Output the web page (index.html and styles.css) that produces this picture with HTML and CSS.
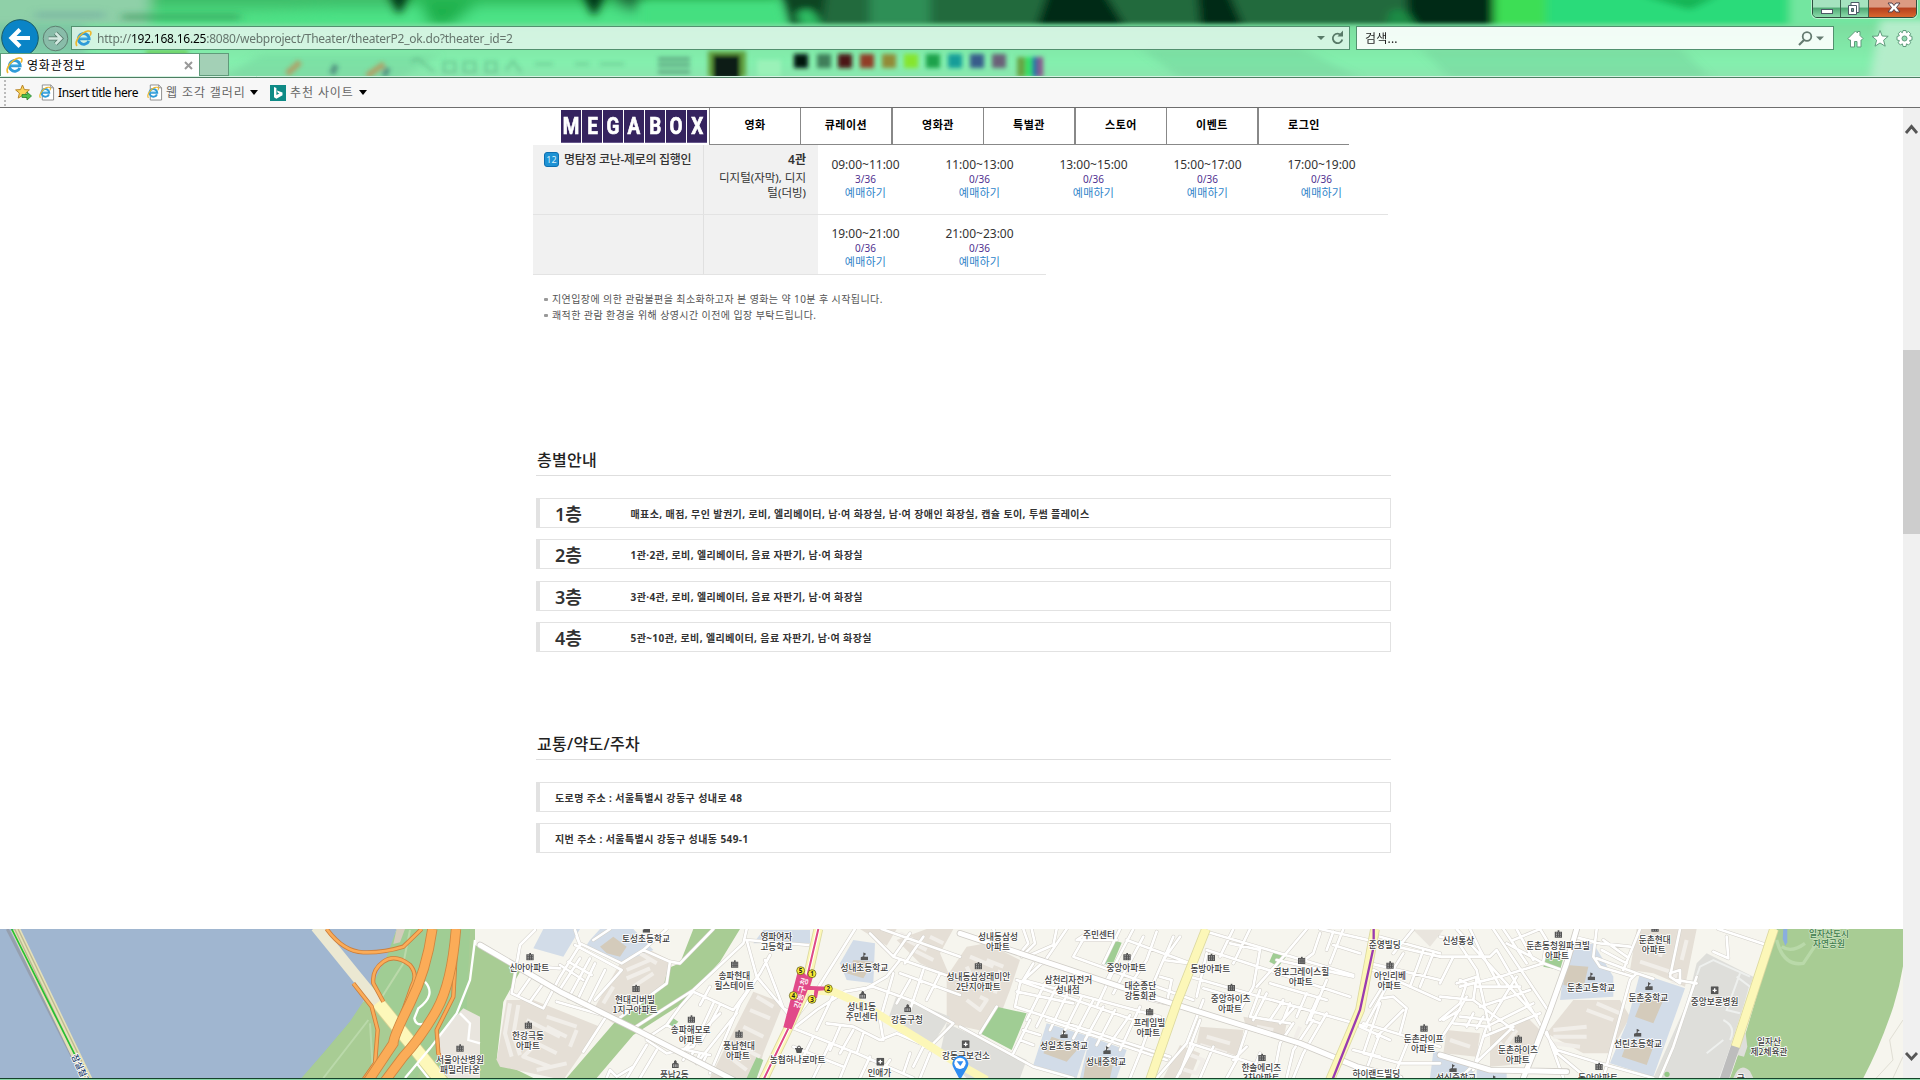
FILE: index.html
```html
<!DOCTYPE html>
<html lang="ko">
<head>
<meta charset="utf-8">
<title>영화관정보</title>
<link rel="stylesheet" href="styles.css">
</head>
<body>
<svg class="defs" width="0" height="0" aria-hidden="true">
  <defs>
    <symbol id="ie" viewBox="0 0 18 18">
      <path d="M14.6 11.6A5.7 5.7 0 1 1 15 9.4H5.2" fill="none" stroke="#2f9bd8" stroke-width="3"/>
      <path d="M5 8.2h8" stroke="#7fd0f3" stroke-width="1"/>
      <path d="M2.2 16.8C-.6 14 3 7 8 3.600c4-2.700 8-3.400 8.700-1.400.4 1.100-.2 2.600-.8 3.600" fill="none" stroke="#edb72c" stroke-width="1.700"/>
    </symbol>
    <symbol id="page" viewBox="0 0 17 18">
      <path d="M3.500 1h9l3 3v13h-12z" fill="#fff" stroke="#8b8b8b"/>
      <path d="M12.500 1v3h3" fill="none" stroke="#8b8b8b"/>
      <use href="#ie" x="0" y="2.500" width="13" height="13"/>
    </symbol>
    <symbol id="apt" viewBox="0 0 24 24" width="24" height="24">
      <path d="M1 5h9V1h5v4h8v18H1z" fill="#555"/>
      <path d="M5 9h3m-3 5h3m-3 5h3m4-10h2m-2 5h2m-2 5h2m4-10h2m-2 5h2m-2 5h2" stroke="#eee" stroke-width="2"/>
    </symbol>
    <symbol id="school" viewBox="0 0 24 24" width="24" height="24"><path d="M1 15l8-3V0l9 5-6 4v4h11v11H1z" fill="#555"/></symbol>
    <symbol id="gov" viewBox="0 0 24 24" width="24" height="24"><path d="M2 24V11l6-3V4l4-4 4 4v4l6 3v13z" fill="#555"/><path d="M7 13v8m5-8v8m5-8v8" stroke="#ddd" stroke-width="2"/></symbol>
    <symbol id="hosp" viewBox="0 0 24 24" width="24" height="24"><rect width="24" height="24" rx="3" fill="#555"/><path d="M12 6v12M6 12h12" stroke="#fff" stroke-width="4"/></symbol>
    <symbol id="mart" viewBox="0 0 24 24" width="24" height="24"><path d="M0 9h5l4-7h6l4 7h5v4h-2l-3 11H5L2 13H0z" fill="#555"/><path d="M8 9l2-4h4l2 4z" fill="#eee"/></symbol>
  </defs>
</svg>

<div class="window">
  <header class="glass">
    <svg class="backdrop" viewBox="0 0 1920 77" width="1920" height="77" aria-hidden="true">
      <defs>
        <linearGradient id="veil" x1="0" y1="0" x2="0" y2="1"><stop offset="0" stop-color="#7cdc9e"/><stop offset=".55" stop-color="#84f0ae"/><stop offset="1" stop-color="#92d8ae"/></linearGradient>
        <filter id="b6" x="-20%" y="-60%" width="140%" height="220%"><feGaussianBlur stdDeviation="7"/></filter>
        <filter id="b4" x="-20%" y="-60%" width="140%" height="220%"><feGaussianBlur stdDeviation="5 3"/></filter>
        <filter id="b3" x="-20%" y="-60%" width="140%" height="220%"><feGaussianBlur stdDeviation="2.200"/></filter>
      </defs>
      <rect width="1920" height="77" fill="#4fe085"/>
      <g filter="url(#b6)">
        <path d="M-20-20H150V40H-20z" fill="#8fd0a8"/>
        <path d="M150-20H400V8H150z" fill="#3cbc68"/>
        <path d="M400-20H780V5H400z" fill="#2cb957"/>
        <path d="M330 8h450v20H240z" fill="#4be386"/>
        <path d="M600-20h40v30h-15z" fill="#1b6535"/><path d="M420 2h60l-30 24h-20z" fill="#1fb04c"/>
      </g>
      <g filter="url(#b4)">
        <path d="M122 14h118v6H122z" fill="#2a8a4d" opacity=".55"/><path d="M35 12h70v6H35z" fill="#6fa9a0" opacity=".6"/>
        <path d="M386-10h26l-13 26zM580-10h28l-14 28z" fill="#053915"/>
        <path d="M640 3h140l6 26H640z" fill="#45df80"/>
        <path d="M778-15h716v43H790z" fill="#216b3d"/>
        <path d="M778-15h50l-6 40h-30z" fill="#0b4420"/>
        <path d="M797 14q14-14 24 12h-20z" fill="#2fbd63"/>
        <path d="M870-15h60v40h-60z" fill="#2d8f57"/>
        <path d="M1050-15h50l26 42h-90zM1196-15h30l18 42h-44zM1405-15h91l-2 42h-85z" fill="#012a12"/>
        <path d="M1390 12q14-10 26 14h-30z" fill="#1d8b45"/>
        <path d="M1494-15h60l-6 43h-54z" fill="#3ede55"/>
        <path d="M1546-15h260v43h-260z" fill="#2bdb7a"/><path d="M1640-5h80l-30 15z" fill="#13b455"/>
        <path d="M1790-15h140v50h-140z" fill="#73e6a0"/>
      </g>
      <rect x="-20" y="24" width="1960" height="70" fill="url(#veil)" filter="url(#b3)"/>
      <g filter="url(#b4)"><path d="M-10 24h95v30H-10z" fill="#7fb9a6" opacity=".7"/><path d="M260 55h180l-50 30H210zM1140 48l40 30h180l-60-30zM1420 48l30 30h260l-30-30z" fill="#72ce98" opacity=".4"/><path d="M1880 20h50v60h-60z" fill="#b4edca"/></g>
      <g filter="url(#b3)">
        <path d="M146 50h42v6h-42z" fill="#6fd060"/>
        <g opacity=".55">
          <path d="M287 74l13-12M367 76l17-12" stroke="#d5733d" stroke-width="6"/><path d="M332 74l4-9M384 76l4-8" stroke="#355c68" stroke-width="6"/>
          <path d="M412 62q5-6 10 0l12 10M444 62h11v10h-11zM464 62h11v10h-11zM486 62h10v10h-10zM506 70l7-9 8 11M535 64h18M575 64h14M600 64h24" fill="none" stroke="#3f8963" stroke-width="2.200" opacity=".7"/>
        </g>
        <path d="M658 59h32m-32 6h32m-32 7h32" stroke="#579a78" stroke-width="3"/>
        <path d="M708 51h38v26h-38z" fill="#62a23f"/><path d="M713 55h27v24h-27z" fill="#101d18"/>
        <path d="M757 60h24v16h-24z" fill="#9af1b8"/>
        <path d="M794 54h14v14h-14z" fill="#04140d"/><path d="M817 54h14v14h-14z" fill="#417f5a"/>
        <path d="M838 54h14v14h-14z" fill="#4b1414"/><path d="M860 54h14v14h-14z" fill="#913c27"/>
        <path d="M882 54h14v14h-14z" fill="#928b39"/><path d="M904 54h14v14h-14z" fill="#86e52e"/>
        <path d="M926 54h14v14h-14z" fill="#1fa24c"/><path d="M948 54h14v14h-14z" fill="#159d99"/>
        <path d="M970 54h14v14h-14z" fill="#375b8b"/><path d="M992 54h14v14h-14z" fill="#6b6078"/>
        <path d="M1017 57h8v20h-8z" fill="#67a444"/><path d="M1025 57h7v20h-7z" fill="#34e067"/><path d="M1032 57h6v20h-6z" fill="#2e6fa4"/><path d="M1038 57h5v20h-5z" fill="#8b528b"/>
      </g>
      <path d="M0 76.500h1920" stroke="#d5f3e2"/>
    </svg>

    <div class="winbtns">
      <span class="wb"><svg width="28" height="22"><rect x="8.500" y="10.500" width="11" height="4" fill="#fff" stroke="#4b5a66"/></svg></span>
      <span class="wb"><svg width="27" height="22"><path d="M10 3.500h8v10h-8z" fill="#fff" stroke="#4b5a66"/><path d="M7.500 6.500h8v9h-8z" fill="#fff" stroke="#4b5a66"/><path d="M10.500 9.500h2v3h-2z" fill="#6aa888" stroke="#4b5a66"/></svg></span>
      <span class="wb close"><svg width="48" height="22"><path d="M19 4h4l2 2.500L27 4h4l-3.500 4.500L31 13h-4l-2-2.500-2 2.500h-4l3.500-4.500z" fill="#fff" stroke="#54414b"/></svg></span>
    </div>

    <div class="navrow">
      <div class="travel">
        <span class="back"><svg width="38" height="38" viewBox="0 0 38 38"><circle cx="19" cy="19" r="18.300" fill="#0a84c6" stroke="#1b5a62"/><path d="M29 19H12M19 10.500L10.500 19l8.500 8.500" fill="none" stroke="#fff" stroke-width="4.200"/></svg></span>
        <span class="fwd"><svg width="27" height="27" viewBox="0 0 27 27"><circle cx="13.500" cy="13.500" r="12.300" fill="#8fb5ac" fill-opacity=".6" stroke="#5d7f70"/><path d="M6.500 13.500h11M13.500 8l5.500 5.500-5.500 5.500" fill="none" stroke="#55776a" stroke-width="4.200"/><path d="M6.500 13.500h11M13.500 8l5.500 5.500-5.500 5.500" fill="none" stroke="#d3e9e1" stroke-width="2.600"/></svg></span>
      </div>
      <div class="address">
        <svg width="17" height="17"><use href="#ie"/></svg>
        <span class="url">http://<b>192.168.16.25</b>:8080/webproject/Theater/theaterP2_ok.do?theater_id=2</span>
        <svg width="30" height="18"><path d="M3 7h8l-4 4z" fill="#587a68"/><path d="M27.500 6.500a4.800 4.800 0 1 0 .8 4" fill="none" stroke="#587a68" stroke-width="1.800"/><path d="M23.500 7.500h5.500v-6z" fill="#587a68"/></svg>
      </div>
      <div class="search">
        <span>검색...</span>
        <svg width="32" height="18"><circle cx="11" cy="7.500" r="4.300" fill="none" stroke="#657a70" stroke-width="1.800"/><path d="M8 11l-5 5" stroke="#657a70" stroke-width="2.200"/><path d="M20 7.500h8l-4 4z" fill="#657a70"/></svg>
      </div>
      <svg class="tools" width="68" height="20" viewBox="0 0 68 20" fill="#fff" stroke="#5f9b7c">
        <path d="M1 9.500L8.500 2l2 2V2.500h2.500V6.500L16 9.500l-1.500 1.500H14V18h-4v-5.500H7.500V18H3.500v-7H2z"/>
        <path d="M33 1.500l2.200 5.500 6 .3-4.600 3.900 1.600 6L33 14l-5 3.200 1.600-6L25 7.300l6-.3z"/>
        <path d="M56 1.500h3l.5 2.200 2-1.200 2.200 2.200-1.200 2 2.500.8v3.500l-2.500.6 1.200 2.200-2.200 2.200-2-1.200-.5 2.700h-3l-.6-2.700-2 1.200-2.200-2.200 1.200-2.200L50 11V7.500l2.400-.8-1.200-2 2.200-2.200 2 1.200z"/><circle cx="57.500" cy="9.500" r="2.500" fill="#90dcb0"/>
      </svg>
    </div>

    <div class="tabs">
      <div class="tab"><svg width="17" height="17"><use href="#ie"/></svg><span>영화관정보</span><svg class="x" width="9" height="9"><path d="M1 1l7 7M8 1L1 8" stroke="#999" stroke-width="2"/></svg></div>
      <div class="newtab"></div>
    </div>
  </header>

  <div class="favbar">
    <i class="grip"></i>
    <svg width="17" height="17" viewBox="0 0 17 17"><path d="M7.500 1l1.900 4.600 5 .3-3.800 3.200 1.200 5-4.300-2.700-4.300 2.700 1.200-5L.6 5.900l5-.3z" fill="#fbd65a" stroke="#b8862a"/><path d="M7 10.500h5V8l4.500 4-4.500 4v-2.500H7z" fill="#4fc04c" stroke="#2a8230" stroke-width=".8"/></svg>
    <a class="fav f1"><svg width="16" height="17"><use href="#page"/></svg><span>Insert title here</span></a>
    <a class="fav f2"><svg width="16" height="17"><use href="#page"/></svg><span>웹 조각 갤러리</span><i class="caret"></i></a>
    <a class="fav f3"><svg width="16" height="16"><path d="M0 0h16v16H0z" fill="#0e8a86"/><path d="M4 2l2.400 1v7l3-1.500-1.600-.8-.9-2.200L12.500 7.500v2.700L6.400 13.800 4 12.300z" fill="#fff"/></svg><span>추천 사이트</span><i class="caret"></i></a>
  </div>

  <div class="viewport">
    <main class="page">
      <div class="topnav">
        <div class="logo"><b><i>M</i></b><b><i>E</i></b><b><i>G</i></b><b><i>A</i></b><b><i>B</i></b><b><i>O</i></b><b><i>X</i></b></div>
        <nav class="menu"><a>영화</a><a>큐레이션</a><a>영화관</a><a>특별관</a><a>스토어</a><a>이벤트</a><a>로그인</a></nav>
      </div>

      <section class="schedule">
        <div class="row first">
          <div class="movie"><span class="age">12</span><span>명탐정 코난-제로의 집행인</span></div>
          <div class="hall"><b>4관</b><span>디지털(자막), 디지<br>털(더빙)</span></div>
          <div class="slot"><time>09:00~11:00</time><em>3/36</em><a>예매하기</a></div>
          <div class="slot"><time>11:00~13:00</time><em>0/36</em><a>예매하기</a></div>
          <div class="slot"><time>13:00~15:00</time><em>0/36</em><a>예매하기</a></div>
          <div class="slot"><time>15:00~17:00</time><em>0/36</em><a>예매하기</a></div>
          <div class="slot"><time>17:00~19:00</time><em>0/36</em><a>예매하기</a></div>
        </div>
        <div class="row second">
          <div class="movie"></div>
          <div class="hall"></div>
          <div class="slot"><time>19:00~21:00</time><em>0/36</em><a>예매하기</a></div>
          <div class="slot"><time>21:00~23:00</time><em>0/36</em><a>예매하기</a></div>
        </div>
      </section>
      <ul class="notes">
        <li>지연입장에 의한 관람불편을 최소화하고자 본 영화는 약 10분 후 시작됩니다.</li>
        <li>쾌적한 관람 환경을 위해 상영시간 이전에 입장 부탁드립니다.</li>
      </ul>

      <section class="info floors">
        <h2>층별안내</h2>
        <div class="bar"><strong>1층</strong><span>매표소, 매점, 무인 발권기, 로비, 엘리베이터, 남·여 화장실, 남·여 장애인 화장실, 캡슐 토이, 투썸 플레이스</span></div>
        <div class="bar"><strong>2층</strong><span>1관·2관, 로비, 엘리베이터, 음료 자판기, 남·여 화장실</span></div>
        <div class="bar"><strong>3층</strong><span>3관·4관, 로비, 엘리베이터, 음료 자판기, 남·여 화장실</span></div>
        <div class="bar"><strong>4층</strong><span>5관~10관, 로비, 엘리베이터, 음료 자판기, 남·여 화장실</span></div>
      </section>

      <section class="info access">
        <h2>교통/약도/주차</h2>
        <div class="bar"><span>도로명 주소 : 서울특별시 강동구 성내로 48</span></div>
        <div class="bar"><span>지번 주소 : 서울특별시 강동구 성내동 549-1</span></div>
      </section>

      <svg class="map" viewBox="0 27 5709 447" width="1903" height="149">
        <defs>
          <!-- local streets, drawn once as casing and once as surface -->
          <g id="streets">
            <g transform="translate(1440 0)">
              <path d="M165 30L120 75 95 220 190 265 240 170 300 75 285 30M150 175L115 225M190 190L150 245M240 145L165 140M285 75L425 150M240 135L310 180M265 125L335 165M300 115L235 215M330 115L265 235M345 130L290 245M375 150L320 260M230 245L385 290M290 50L300 75M340 60L390 27M300 70L425 130 490 90 570 125 600 130 700 27M490 90L560 27M570 125L560 190 410 300M425 150L345 240M375 295L310 395M460 325L640 210 790 70 800 27M500 355L560 315 600 260 640 215 760 270 840 160M690 200L660 255M800 60L830 170 940 300M800 60L985 75M855 120L910 265 940 280M870 105L840 160 780 250 690 460M500 360L560 400 640 380 700 250M560 315L660 370 720 255M600 400L720 280M650 430L770 280M440 474L500 375M480 474L530 390M380 474L390 450 410 470 460 440M620 390L690 405M620 400L610 420M640 395L630 415M660 400L650 420M680 405L670 425"/>
              <path d="M1125 27L1010 210 935 310M1170 40L1240 110 1440 180M1205 27L1440 110M1240 110L1290 40M1275 130L1330 50M1150 210L1220 170 1260 120M1095 215L1180 200 1290 240 1420 310M1095 215L1010 270 940 325 1130 400 1300 474M1240 160L1200 300 1210 360M1260 160L1440 225M1290 180L1250 250M1330 150L1290 270M1380 160L1340 240M1420 310L1360 370M1060 225L1010 330M1040 310L1120 320 1200 360 1250 340 1320 370M1080 320L1050 390M1120 330L1080 400M1150 340L1130 400M1000 350L960 430M1050 370L1000 474M1110 400L1080 474M1170 410L1140 474M1230 420L1190 474M1300 440L1330 380 1380 390M1290 400L1270 460M1350 400L1320 474M940 380L1090 440"/>
            </g>
            <g transform="translate(2880 0)">
              <path d="M190 27L205 70 180 100M215 27L225 70 185 110M290 27L280 75 200 110M320 27L250 130M380 40L340 110 700 240M400 27L350 60 470 60M480 27L430 130M520 27L440 180M550 50L460 220M590 35L560 120 520 180M640 50L580 190M660 50L610 120 690 130M500 60L690 130M245 130L180 190 165 260 630 410M170 180L580 320M220 130L190 180 600 290M170 215L340 250M255 190L200 300M290 200L230 320M325 215L270 330M365 230L310 340M400 240L340 355M430 260L375 360M465 270L410 375M510 285L440 385M470 130L410 260M540 260L480 390M580 290L540 400 510 474M210 300L160 400M190 330L240 345M180 360L220 375M260 300L620 420M600 170L635 180 620 250 570 240M0 320L220 440 340 474M60 340L110 260M100 27L120 80"/>
              <path d="M740 35L1180 165M740 90L1170 230M820 27L780 110M870 27L820 130M690 170L900 230 1220 320M810 70L900 90 880 200 840 270M730 205L800 225M740 100L710 230M1040 27L970 110 890 200M1080 40L1060 100 1020 130M1120 35L1100 90M1150 27L1110 130M950 120L1180 170M930 190L1100 240M900 210L870 290 990 310M920 220L880 300M970 240L930 300M990 250L970 300M1000 265L960 310M1040 220L1010 290M1075 230L1040 310M1100 180L1050 300 1080 310M730 240L680 370 590 474M720 300L660 460M860 330L830 420 800 474M690 370L940 450M700 380L650 474M860 380L820 420M1000 310L960 370 940 474M1060 300L1000 390 980 474M1100 280L1030 400 1000 474M760 380L720 474M900 400L870 474"/>
              <path d="M1080 27L1440 110M1120 75L1200 100M1260 50L1440 100M1360 27L1300 100M1390 90L1350 200M1420 100L1380 200M1230 130L1440 180M1240 150L1440 240M1330 100L1230 260M1290 180L1220 310M1260 235L1300 230 1340 265 1320 340M1260 250L1210 400M1210 310L1440 380M1330 270L1250 350M1200 320L1290 360M1260 340L1210 474M1210 400L1320 430 1440 430M1350 350L1300 474M1180 390L1260 410"/>
            </g>
            <g transform="translate(4320 0)">
              <path d="M0 50L50 60 110 150 150 330M0 110L150 110 170 90 310 330M50 27L290 290M90 27L120 90 180 200M160 27L330 280M190 27L260 130M220 60L300 27M200 70L310 130 365 150M310 130L180 170 60 200M230 27L280 120M300 27L320 60 310 125M40 110L0 190M0 230L100 240 110 170 50 190M110 200L240 200M60 180L80 190 60 250 0 300M100 240L220 330M120 260L270 210M140 320L280 250M150 300L230 170M60 270L10 300M80 230L40 300 0 360M100 280L80 320M130 290L110 325M60 290L150 300M40 310L140 320 130 350M130 350L300 280M310 330L350 390 480 430 640 474M130 350L100 450M340 390L440 474M470 27L460 110 480 140 580 170M490 60L560 110M485 90L560 130M470 115L590 160M400 50L480 70 570 80M600 27L550 150M570 180L490 474M570 180L590 160 640 176M320 335L370 474M220 320L60 474M770 190L710 180M660 474L700 380 770 170M720 27L690 170 720 190 720 150 690 160M820 95L865 115 860 50M835 27L980 75"/>
            </g>
          </g>
          <g id="avenues">
            <path d="M1440 75L1680 215 1900 325 2200 480M2880 40L3060 100 3450 230 3900 370 4070 440 4200 474M4730 27L4700 130 4650 270 4600 400 4570 474M4320 405L4470 450 4700 455"/>
          </g>
        </defs>
        <rect y="27" width="5709" height="447" fill="#f6f5ee"/>

        <!-- river and riverside park -->
        <path d="M1190 27H1460V70L1560 150 1510 240 1485 420 1590 474H900V400L1090 245z" fill="#a0cd94"/>
        <path d="M0 27H1190L1160 110 1090 245 1050 305 970 400 905 474H0z" fill="#a0b6d0"/>
        <path d="M1050 305L1090 245 1200 290 1150 474H905L970 400z" fill="#a8cc94"/>
        <path d="M1190 27h25l-15 40-20 5z" fill="#d4ccbc"/>
        <path d="M1410 27H1440L1440 80 1560 155 1510 245 1490 420 1600 474H1250L1290 390 1400 270z" fill="#a8cc94"/>
        <path d="M1425 27H1650L1560 150 1425 75z" fill="#f6f5ee"/>
        <path d="M1390 265L1440 290V474H1330L1310 350z" fill="#e9e5de"/>
        <path d="M1230 30L1210 130 1140 240M1105 300L970 474M1110 310L1120 474" fill="none" stroke="#bad9aa" stroke-width="6"/>
        <path d="M2080 27H2220L2160 125 2040 255 1900 345 1790 474H1700L1850 300 1990 150 2040 130z" fill="#a8cc94"/>

        <!-- blocks -->
        <g fill="#e5dfd6">
          <path d="M1520 240L1600 240 1800 320 1690 480 1500 440 1490 420z"/>
          <path d="M1860 130L1940 85 2010 120 1990 200 1840 310 1780 270z"/>
          <path d="M2260 215L2350 250 2290 400 2270 474H2130z"/>
          <path d="M2690 60L2780 27H2860L2820 100 2850 170 2760 130zM2580 27h110l-30 50z"/>
          <path d="M2900 80L2960 70 3060 120 3030 210 2980 340 2840 310V170z"/>
          <path d="M3600 320L3730 330 3720 410 3590 370zM3730 290L3860 310 3850 360 3740 330zM3540 375l60 25-30 74h-80z"/>
          <path d="M4910 27H5090L5055 200 4960 160 4890 150z"/>
          <path d="M4720 240L4860 240 4890 290 4830 400 4750 400 4640 340z"/>
          <path d="M4340 330L4440 340 4430 410 4330 400zM4470 340L4580 290 4620 330 4590 430 4470 440z"/>
        </g>
        <g fill="#dededa"><path d="M2690 225L2850 290 2800 370 2660 310z"/><path d="M5090 130L5120 100 5260 170 5160 474H4960L5060 250z"/><path d="M2840 310L3080 420 3060 474H2900L2820 400z"/></g>
        <g fill="#d2dce8">
          <path d="M1630 27H1740L1690 110 1600 85zM1770 60L1800 27H1900L1960 90 1860 130 1760 75zM2290 30H2430V70H2260z"/>
          <path d="M2560 60L2625 70 2620 190 2540 180 2520 130z"/>
          <path d="M3140 310L3270 350 3230 474 3100 435zM3270 350L3380 390 3350 474H3240z"/>
          <path d="M4700 90L4780 70 4840 170V230L4680 240z"/>
          <path d="M4920 160L5055 205 4960 470 4830 430 4880 310z"/>
          <path d="M4320 415L4420 440V474H4320zM4430 450h90v24h-90zM4300 395h20v79h-30z"/>
        </g>
        <g fill="#d4cbbb">
          <path d="M1800 80L1840 50 1880 80 1860 110 1820 100zM2560 120L2620 125 2590 175 2540 160z"/>
          <path d="M3155 350L3240 380 3200 425 3130 400zM3260 410l80 20-10 44h-80z"/>
          <path d="M4700 135L4765 140 4750 205 4690 195zM4925 240L4990 240 4960 310 4905 290zM4880 370L4960 380 4940 435 4865 410z"/>
          <path d="M4240 30h90l-40 50z" fill="#e9e5de"/>
        </g>
        <g fill="#a0cd94">
          <path d="M3340 60L3365 68 3335 140 3310 130zM2990 260L3080 280 3035 390 2940 340zM3820 98L3860 108 3835 140 3808 125zM4640 105L4690 115 4680 150 4630 140zM2270 410L2290 420 2270 474H2240zM2020 295l15 10-20 20-15-5z"/>
        </g>
        <path d="M5330 27H5718Q5718 140 5680 260 5640 380 5590 474H5190L5240 330z" fill="#a8cc94"/>
        <path d="M5330 60q20 80 80 70l40-60M5345 80q30 20 70-10" fill="none" stroke="#b9d9a9" stroke-width="10"/>
        <path d="M5350 27h12v40l-6 10-8-20z" fill="#8aaede"/>
        <path d="M5225 345l12-5 5 40-10 30-20-5zM5200 474q20-50 50-20l10 20z" fill="#dededa"/>
        <path d="M5709 300l-40 60 10 60-50 54M5709 410l-30 64" fill="none" stroke="#e0ded4" stroke-width="3"/>
        <path d="M5220 160L5180 270 5220 280M5210 170L5250 200 5210 340 5160 474M5060 250l40-110 40-20 110 50M5120 400l50-40M5170 300q40 20 20 60" fill="none" stroke="#eef0ee" stroke-width="6"/>

        <!-- building footprints -->
        <g class="bldg">
          <path d="M1530 250l-15 90 20 70M1555 255l-15 90 20 60M1580 300l100 50M1640 290l90 30M1640 320l60 30M1670 400l-60-30-40 40 80 30M1700 430l-90 20M1730 330l-20 50M1880 150l70-30M1880 175l70-30M1900 200l60-40M1840 200l-30 50M1920 100l50 30"/>
          <path d="M2270 230l50 30M2250 270l60 25M2230 320l60 30M2220 380l60 30M2200 420l40 30M2720 60l60 30M2740 90l60 30M2790 50l40 20M2700 40l40 20"/>
          <path d="M2910 110l70 30M2900 140l20 40M2960 120l50 20M2900 240l40 30 20-30-20-10M3000 150l-15 70M3620 350l70 20M3600 375l80 25M3770 320l50 10M3560 400l50 20-20 40-50-15M3900 320l-20 50"/>
          <path d="M4920 125l90 30M4950 60l-10 40M4990 70l-10 40M5060 60l-15 60M5030 150l-10 40M4760 270l80 30M4790 250l70 30M4660 330l100-10M4660 350l100 0M4660 370l80 10M4350 360l60 20M4490 360l30 30M4550 330l-30 40 40 30"/>
        </g>

        <use href="#streets" class="case"/><use href="#streets" class="surf"/>
        <use href="#avenues" class="acase"/><use href="#avenues" class="asurf"/>

        <!-- left bridge -->
        <path d="M22 27L222 420" stroke="#959fae" stroke-width="9"/>
        <path d="M46 27L264 480" stroke="#e4e0b8" stroke-width="28"/>
        <path d="M44 27L260 480M54 27L272 480" stroke="#bdb993" stroke-width="4"/>
        <path d="M35 27L225 405" stroke="#23c130" stroke-width="5"/>

        <!-- expressway interchange -->
        <path d="M948 20L1135 250" stroke="#ebe8d2" stroke-width="34"/>
        <path d="M1135 250L1330 490" stroke="#d6d292" stroke-width="42"/><path d="M1133 247L1330 490" stroke="#fdf8ba" stroke-width="37"/>
        <path d="M1275 185q35 40-20 80l-12 30q5 25 30 15l40-40M1425 60L1410 180 1370 280 1290 385 1215 474M1250 430l40 50M1380 280l30 30-5 50 35 10" fill="none" stroke="#fff" stroke-width="7"/>
        <defs><path id="ramps" d="M980 27Q1030 95 1090 97T1210 80L1265 27M1060 190L1115 260 1133 330 1125 430 1090 480M1150 245L1120 190Q1115 150 1150 125T1230 135Q1255 165 1235 200L1200 300 1160 400 1110 480M1370 40L1360 230 1310 330 1315 400 1330 430"/></defs>
        <use href="#ramps" class="rampcase"/><use href="#ramps" class="ramp"/>
        <path d="M1297 27Q1280 150 1230 250T1180 370L1100 490M1368 27Q1355 190 1310 270T1210 410L1150 490" fill="none" stroke="#cd8640" stroke-width="31"/>
        <path d="M1297 27Q1280 150 1230 250T1180 370L1100 490M1368 27Q1355 190 1310 270T1210 410L1150 490" fill="none" stroke="#fbac58" stroke-width="26"/>

        <!-- yellow arterials -->
        <g fill="none" stroke="#dcd9a0" stroke-width="29"><path d="M2455 27L2410 230 2360 335 2285 490M3618 27L3530 250 3450 480M4125 27L4080 270 3990 480M5322 27L5206 382"/></g>
        <g fill="none" stroke="#fcf7b8" stroke-width="24"><path d="M2455 27L2410 230 2360 335 2285 490M3618 27L3530 250 3450 480M4125 27L4080 270 3990 480M5322 27L5206 382M2420 210L2500 215 2590 255 2760 360 2880 435 2960 480"/></g>
        <path d="M5206 380L5172 480" stroke="#bdbdbd" stroke-width="27"/>
        <path d="M4121 27V80L4080 270 3997 480" fill="none" stroke="#9a3bb0" stroke-width="7"/>
        <path d="M2455 27L2410 220M2365 325L2290 480" fill="none" stroke="#fff" stroke-width="12"/>
        <path d="M2455 27L2410 220M2365 325L2290 480" fill="none" stroke="#dd4a87" stroke-width="6"/>
        <path d="M2392 160h22l6 8h20l-10 30 55 2v10l-30 2-4 22h-10l2-24h-20l-48 118-25-6z" fill="#e14a89"/>
        <text transform="translate(2400 268) rotate(-75)" class="station">강동구청</text>
        <g class="exit"><circle cx="2402" cy="152" r="12"/><circle cx="2436" cy="161" r="12"/><circle cx="2485" cy="206" r="12"/><circle cx="2436" cy="238" r="12"/><circle cx="2380" cy="227" r="12"/></g>
        <g class="exitno"><text x="2402" y="159">5</text><text x="2436" y="168">1</text><text x="2485" y="213">2</text><text x="2436" y="245">3</text><text x="2380" y="234">4</text></g>

        <g class="pois">
          <use href="#apt" x="1368" y="372"/><use href="#apt" x="1578" y="98"/><use href="#school" x="1927" y="14"/><use href="#apt" x="1896" y="193"/><use href="#apt" x="1573" y="303"/><use href="#apt" x="2192" y="120"/><use href="#apt" x="2062" y="285"/><use href="#apt" x="2205" y="330"/><use href="#gov" x="2014" y="420"/><use href="#mart" x="2385" y="375"/><use href="#school" x="2581" y="97"/><use href="#gov" x="2576" y="212"/><use href="#gov" x="2711" y="252"/><use href="#hosp" x="2629" y="413"/>
          <use href="#apt" x="2923" y="125"/><use href="#hosp" x="2885" y="361"/><use href="#apt" x="3369" y="98"/><use href="#apt" x="3437" y="263"/><use href="#school" x="3180" y="330"/><use href="#school" x="3309" y="378"/><use href="#apt" x="3622" y="100"/><use href="#apt" x="3682" y="190"/><use href="#apt" x="3893" y="109"/><use href="#apt" x="4158" y="123"/><use href="#apt" x="3774" y="400"/><use href="#apt" x="4260" y="312"/>
          <use href="#apt" x="4663" y="30"/><use href="#apt" x="4953" y="12"/><use href="#school" x="4762" y="157"/><use href="#school" x="4935" y="186"/><use href="#school" x="4901" y="326"/><use href="#apt" x="4543" y="345"/><use href="#hosp" x="5132" y="199"/><use href="#apt" x="4785" y="427"/><use href="#school" x="4347" y="432"/><use href="#school" x="4470" y="466"/>
        </g>
        <g class="labels">
          <text transform="translate(214 408) rotate(65)" class="bridge">잠실철교</text>
          <text x="1380" y="428">서울아산병원</text><text x="1380" y="458">패밀리타운</text>
          <text x="1588" y="153">신아아파트</text><text x="1938" y="66">토성초등학교</text>
          <text x="1905" y="250">현대리버빌</text><text x="1905" y="279">1지구아파트</text>
          <text x="1584" y="358">한강극동</text><text x="1584" y="388">아파트</text>
          <text x="2329" y="61">영파여자</text><text x="2329" y="91">고등학교</text>
          <text x="2203" y="176">송파현대</text><text x="2203" y="206">힐스테이트</text>
          <text x="2072" y="340">송파해모로</text><text x="2072" y="370">아파트</text>
          <text x="2217" y="387">풍납현대</text><text x="2214" y="416">아파트</text>
          <text x="2023" y="474">풍납2동</text><text x="2393" y="429">농협하나로마트</text>
          <text x="2593" y="154">성내초등학교</text><text x="2585" y="270">성내1동</text><text x="2585" y="300">주민센터</text>
          <text x="2721" y="309">강동구청</text><text x="2638" y="468">인애가</text>
          <text x="2898" y="417">강동구보건소</text>
          <text x="2994" y="59">성내동삼성</text><text x="2994" y="89">아파트</text>
          <text x="2935" y="181">성내동삼성래미안</text><text x="2935" y="211">2단지아파트</text>
          <text x="3297" y="53">주민센터</text><text x="3205" y="188">삼천리자전거</text><text x="3203" y="218">성내점</text>
          <text x="3379" y="154">중앙아파트</text><text x="3421" y="208">대순종단</text><text x="3421" y="238">강동회관</text>
          <text x="3448" y="318">프레임빌</text><text x="3445" y="348">아파트</text>
          <text x="3192" y="387">성일초등학교</text><text x="3318" y="434">성내중학교</text>
          <text x="3631" y="155">동방아파트</text><text x="3692" y="245">중앙하이츠</text><text x="3690" y="275">아파트</text>
          <text x="3904" y="165">경보그레이스힐</text><text x="3902" y="195">아파트</text>
          <text x="4154" y="83">준영빌딩</text><text x="4170" y="178">아인리베</text><text x="4168" y="208">아파트</text>
          <text x="3784" y="454">한솔에리즈</text><text x="3784" y="484">3차아파트</text><text x="4129" y="472">하이랜드빌딩</text>
          <text x="4271" y="367">둔촌라이프</text><text x="4269" y="397">아파트</text>
          <text x="4375" y="71">신성통상</text><text x="4674" y="86">둔촌동청원파크빌</text><text x="4671" y="116">아파트</text>
          <text x="4964" y="69">둔촌현대</text><text x="4961" y="99">아파트</text><text x="4773" y="214">둔촌고등학교</text>
          <text x="4945" y="243">둔촌중학교</text><text x="4914" y="382">선린초등학교</text>
          <text x="4554" y="400">둔촌하이츠</text><text x="4553" y="430">아파트</text><text x="4794" y="484">동아아파트</text>
          <text x="4368" y="484">성심중학교</text><text x="5144" y="254">중앙보훈병원</text>
          <g class="park"><text x="5487" y="50">일자산도시</text><text x="5487" y="80">자연공원</text></g>
          <text x="5307" y="374">일자산</text><text x="5307" y="405">제2체육관</text><text x="5222" y="486">궁</text>
          <path d="M5001 455a8 8 0 1 0 .1 0" fill="#93c786" stroke="none"/>
        </g>
        <path d="M2880 480L2862 446A24 24 0 1 1 2900 446z" fill="#2e8cf0"/><circle cx="2880" cy="430" r="17" fill="#fff"/><path d="M2870 424h20l-9 14z" fill="#2e8cf0"/>
      </svg>
    </main>
    <aside class="scroll">
      <svg width="17" height="17"><path d="M3 13l5.500-6.500L14 13" fill="none" stroke="#555" stroke-width="2.800"/></svg>
      <div class="thumb"></div>
      <svg width="17" height="20"><path d="M3 5l5.500 6L14 5" fill="none" stroke="#555" stroke-width="2.800"/></svg>
    </aside>
  </div>
  <div class="edge"></div>
</div>
</body>
</html>
```

FILE: styles.css
```css
* { box-sizing: border-box; }
body { margin: 0; background: #fff; overflow: hidden; color: #333; font-family: "Noto Sans", "Noto Sans CJK KR", sans-serif; }
.defs { position: absolute; }
svg { display: block; flex: none; }
.window { width: 1920px; height: 1080px; display: flex; flex-direction: column; }

/* window frame */
.glass { position: relative; height: 78px; flex: none; padding-top: 26px; border-bottom: 1px solid #4d7d62; overflow: hidden; }
.backdrop { position: absolute; left: 0; top: 0; }
.winbtns { position: absolute; right: 3px; top: -2px; display: flex; height: 20px; border: 1px solid #2f4f40; border-radius: 0 0 5px 5px; overflow: hidden; box-shadow: 0 0 0 1px rgba(255,255,255,.5); }
.wb { width: 28px; border-right: 1px solid #3c6650; background: linear-gradient(#a5e3bf 0 45%, #4ea873 50%, #8bdcab); }
.wb.close { width: 47px; border-right: 0; background: linear-gradient(#dc9a82 0 45%, #b5401e 50%, #d9672e); }
.navrow { position: relative; display: flex; align-items: flex-start; height: 24px; }
.travel { display: flex; align-items: center; gap: 3px; width: 71px; height: 24px; padding-left: 1px; }
.fwd { margin-top: 1px; }
.address, .search { height: 24px; border: 1px solid #52916f; display: flex; align-items: center; font-size: 12px; line-height: 20px; }
.address { width: 1279px; background: rgba(228,248,238,.82); padding: 0 5px 0 3px; gap: 5px; color: #66756d; }
.url { flex: 1; letter-spacing: -.235px; white-space: nowrap; padding-top: 2px; }
.url b { color: #000; font-weight: 400; }
.search { width: 478px; margin-left: 6px; padding: 0 5px 0 8px; background: rgba(255,255,255,.9); color: #222; justify-content: space-between; letter-spacing: .2px; }
.search span { padding-top: 2px; }
.tools { margin: 3px 0 0 13px; }
.tabs { position: relative; display: flex; margin-top: 3px; height: 24px; }
.tab { width: 200px; height: 23px; background: #fff; border: 1px solid #5f9b7a; border-bottom: 0; display: flex; align-items: center; padding: 0 6px 0 5px; gap: 4px; font-size: 12px; color: #000; letter-spacing: .8px; line-height: 20px; }
.tab span { flex: 1; padding-top: 2px; }
.newtab { width: 29px; height: 23px; background: #a3d0b6; border: 1px solid #5f9b7a; border-left: 0; }

.favbar { height: 30px; flex: none; background: #f7f7f7; border-bottom: 1px solid #6e6e6e; display: flex; align-items: center; font-size: 12px; line-height: 20px; color: #666; }
.grip { width: 2px; height: 26px; margin: 0 9px 0 4px; background: repeating-linear-gradient(#bbb 0 2px, transparent 2px 4px); }
.fav { display: flex; align-items: center; gap: 4px; white-space: nowrap; }
.fav span { letter-spacing: .9px; }
.f1 { margin-left: 7px; width: 108px; color: #000; gap: 3px; }
.f1 span { letter-spacing: -.4px; }
.f2 { width: 123px; gap: 3px; }
.caret { border: 4px solid transparent; border-top: 5px solid #000; border-bottom: 0; margin-left: 1px; }

/* page */
.viewport { display: flex; height: 970px; flex: none; }
.page { width: 1903px; height: 970px; background: #fff; overflow: hidden; }
.topnav { display: flex; margin-left: 561px; height: 37px; }
.logo { display: flex; gap: 1px; width: 148px; padding-top: 2px; }
.logo b { width: 20px; height: 33px; background: #35235f; border-bottom: 1px solid #66588c; display: flex; justify-content: center; color: #fff; font: 700 23px/33px "Roboto", "Liberation Sans", sans-serif; }
.logo i { font-style: normal; transform: scaleX(.82); -webkit-text-stroke: .7px #fff; }
.menu { display: flex; width: 640px; height: 37px; border-bottom: 1px solid #888; }
.menu a { flex: 1; border-left: 1px solid #888; text-align: center; font: 700 11px/33px "Noto Sans", "Noto Sans CJK KR", sans-serif; color: #000; letter-spacing: .5px; }
.menu a:nth-child(odd):not(:first-child) { border-left-width: 2px; }

.row { display: flex; margin-left: 533px; width: fit-content; border-bottom: 1px solid #e3e3e3; }
.first { height: 70px; }
.second { height: 60px; }
.movie { width: 171px; background: #f1f1f1; border-right: 1px solid #e0e0e0; display: flex; align-items: flex-start; padding: 7px 0 0 11px; gap: 5px; font-weight: 500; font-size: 12px; line-height: 16px; letter-spacing: -.3px; white-space: nowrap; }
.age { width: 15px; height: 15px; border-radius: 3px; border: 1px solid #0d6fb0; background: #1e92d4; color: #d8f0fc; font: 400 9px/13px "Noto Sans", sans-serif; text-align: center; letter-spacing: 0; }
.hall { width: 114px; background: #f1f1f1; padding: 7px 12px 0 0; text-align: right; font-size: 11.500px; line-height: 15px; letter-spacing: 0; white-space: nowrap; }
.hall b { display: block; font-size: 12px; font-weight: 600; line-height: 16px; padding-bottom: 2px; height: 18px; }
.slot { width: 114px; padding-top: 12px; padding-right: 19px; display: flex; flex-direction: column; align-items: center; font-size: 12px; line-height: 16px; white-space: nowrap; }
.second .slot { padding-top: 11px; }
.slot em { font-style: normal; font-size: 10px; line-height: 13px; color: #50308f; }
.slot a { font-size: 11px; line-height: 13px; color: #2f83c9; letter-spacing: .2px; }
.notes { list-style: none; margin: 16px 0 0 544px; padding: 0; height: 32px; font-size: 10px; line-height: 16px; color: #555; letter-spacing: .41px; }
.notes li { display: flex; align-items: center; gap: 4px; }
.notes li::before { content: ""; width: 4px; height: 3px; border-radius: 1px; background: #999; }

.info { margin-left: 536px; width: 855px; }
.info h2 { margin: 0 0 22px; height: 28px; border-bottom: 1px solid #dedede; font-size: 16px; font-weight: 500; line-height: 24px; color: #222; letter-spacing: .3px; padding-left: 1px; }
.floors { margin-top: 125px; height: 284px; }
.access { height: 197px; }
.bar { height: 30px; margin-bottom: 11.400px; border: 1px solid #e2e2e2; border-left-width: 4px; padding-left: 15px; display: flex; align-items: center; font-size: 10px; font-weight: 700; white-space: nowrap; color: #333; letter-spacing: .41px; }
.bar strong { width: 75.500px; font-size: 18px; font-weight: 600; line-height: 28px; padding-top: 2px; letter-spacing: 0; }
.bar span { line-height: 20px; padding-top: 2px; }

.map { overflow: hidden; }
.case, .surf, .acase, .asurf { fill: none; stroke-linejoin: round; stroke-linecap: round; }
.case { stroke: #d3d0ca; stroke-width: 11px; }
.surf { stroke: #fff; stroke-width: 8px; }
.acase { stroke: #cfccc6; stroke-width: 20px; }
.asurf { stroke: #fff; stroke-width: 15px; }
.rampcase { fill: none; stroke: #cd7f3b; stroke-width: 13px; stroke-linejoin: round; }
.ramp { fill: none; stroke: #fbac58; stroke-width: 8px; stroke-linejoin: round; }
.bldg { fill: none; stroke: #f1eee9; stroke-width: 12px; stroke-linejoin: round; }
.labels { font: 500 26px "Noto Sans CJK KR", sans-serif; fill: #3c3c3c; stroke: #fff; stroke-width: 5px; stroke-linejoin: round; paint-order: stroke; text-anchor: middle; }
.labels .park { fill: #3d7b4c; stroke: #cbe2bf; }
.labels .bridge { fill: #26406b; text-anchor: start; }
.station { font: 500 26px "Noto Sans CJK KR", sans-serif; fill: #fff; }
.exit { fill: #f7ea35; stroke: #4f4a12; stroke-width: 2px; }
.exitno { font: 700 19px "Noto Sans", sans-serif; text-anchor: middle; fill: #222; }

.scroll { width: 17px; height: 970px; background: #f0f0f0; display: flex; flex-direction: column; padding-top: 12px; }
.thumb { height: 184px; margin: 213px 0 514px; background: #cdcdcd; }
.edge { height: 2px; flex: none; background: #88d6a6; border-top: 1px solid #16432a; }
```
